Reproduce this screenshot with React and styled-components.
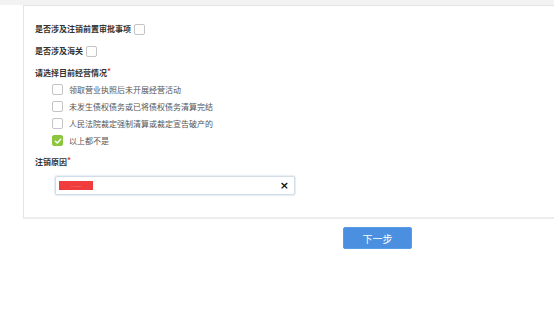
import React from "react";
import styled, { createGlobalStyle } from "styled-components";

const Global = createGlobalStyle`
  html, body { margin: 0; padding: 0; background: #fff; }
  body { font-family: "Noto Sans CJK SC", "Noto Sans", sans-serif; }
`;

const TopBar = styled.div`
  height: 5px;
  background: #f2f2f2;
`;

const Panel = styled.div`
  margin-left: 23px;
  width: 528px;
  border: 1px solid #e4e4e4;
  border-bottom: 2px solid #ececec;
  padding: 17px 0 22px 11px;
  display: flex;
  flex-direction: column;
`;

const Row = styled.div`
  display: flex;
  align-items: center;
  height: 11px;
  margin-top: ${(p) => p.$mt || 0}px;
  margin-left: ${(p) => p.$indent || 0}px;
`;

const Label = styled.span`
  font-size: 8px;
  line-height: 11px;
  font-weight: 700;
  color: #333;
  white-space: nowrap;
`;

const Req = styled.span`
  color: #e53935;
  font-size: 8px;
  vertical-align: top;
  line-height: 8px;
`;

const OptionText = styled.span`
  font-size: 8px;
  line-height: 11px;
  color: #555;
  white-space: nowrap;
  margin-left: 6px;
`;

const Box = styled.span`
  box-sizing: border-box;
  width: 11px;
  height: 11px;
  border-radius: 2px;
  border: 1px solid ${(p) => (p.$checked ? "#8cc63f" : "#c4c4c4")};
  background: ${(p) => (p.$checked ? "#8cc63f" : "#fff")};
  margin-left: ${(p) => p.$ml || 0}px;
  margin-top: ${(p) => p.$dy || 0}px;
  display: inline-flex;
  align-items: center;
  justify-content: center;
  flex: none;
`;

const Check = () => (
  <svg width="8" height="8" viewBox="0 0 8 8">
    <path d="M1.4 4.2 L3.3 6 L6.7 2.2" fill="none" stroke="#fff" strokeWidth="1.4" strokeLinecap="round" strokeLinejoin="round" />
  </svg>
);

const Options = styled.div`
  display: flex;
  flex-direction: column;
  gap: 6px;
  margin-top: 6px;
  margin-left: 17px;
`;

const Input = styled.div`
  box-sizing: border-box;
  margin-top: 9px;
  margin-left: 20px;
  width: 240px;
  height: 19px;
  border: 1px solid #d3dde8;
  border-radius: 2px;
  box-shadow: 0 0 1px 1px #e6edf4;
  display: flex;
  align-items: center;
  padding: 0 5px 0 3px;
`;

const Tag = styled.span`
  width: 34px;
  height: 9px;
  background: #f03c3c;
  display: inline-flex;
  align-items: center;
  justify-content: center;
  font-size: 3px;
  color: #f7c4c4;
  letter-spacing: 0;
  overflow: hidden;
`;

const Clear = styled.span`
  margin-left: auto;
  font-size: 11px;
  line-height: 11px;
  font-weight: 700;
  color: #111;
  font-family: "DejaVu Sans", sans-serif;
`;

const Footer = styled.div`
  margin-top: 8px;
  padding-left: 343px;
`;

const Button = styled.button`
  width: 69px;
  height: 22px;
  border: 1px solid #5a9be6;
  border-radius: 2px;
  background: #4a8fe0;
  color: #fff;
  font-family: "Noto Sans CJK SC", sans-serif;
  font-size: 10px;
  padding: 0;
  display: flex;
  align-items: center;
  justify-content: center;
`;

const options = [
  { text: "领取营业执照后未开展经营活动", checked: false },
  { text: "未发生债权债务或已将债权债务清算完结", checked: false },
  { text: "人民法院裁定强制清算或裁定宣告破产的", checked: false },
  { text: "以上都不是", checked: true },
];

export default function App() {
  return (
    <>
      <Global />
      <TopBar />
      <Panel>
        <Row>
          <Label>是否涉及注销前置审批事项</Label>
          <Box $ml={3} $dy={1} />
        </Row>
        <Row $mt={11}>
          <Label>是否涉及海关</Label>
          <Box $ml={3} $dy={1} />
        </Row>
        <Row $mt={11}>
          <Label>
            请选择目前经营情况<Req>*</Req>
          </Label>
        </Row>
        <Options>
          {options.map((o) => (
            <Row key={o.text}>
              <Box $checked={o.checked}>{o.checked && <Check />}</Box>
              <OptionText>{o.text}</OptionText>
            </Row>
          ))}
        </Options>
        <Row $mt={10}>
          <Label>
            注销原因<Req>*</Req>
          </Label>
        </Row>
        <Input>
          <Tag>— ———</Tag>
          <Clear>×</Clear>
        </Input>
      </Panel>
      <Footer>
        <Button>下一步</Button>
      </Footer>
    </>
  );
}
